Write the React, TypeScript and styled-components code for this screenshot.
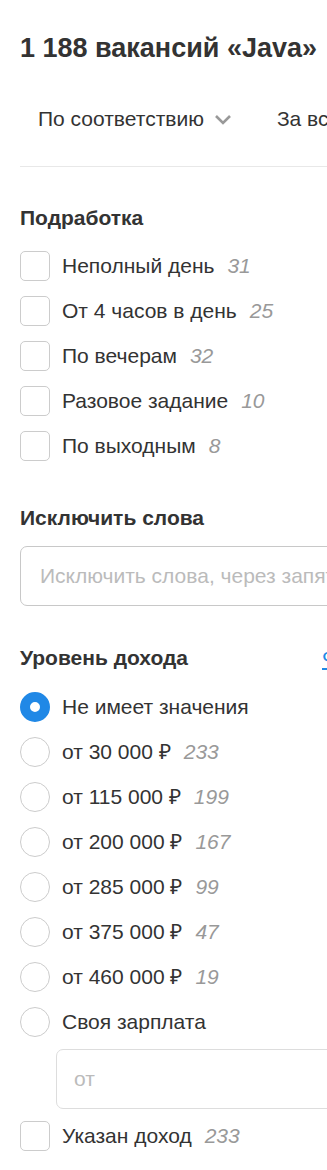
import React from 'react'
import styled, { createGlobalStyle } from 'styled-components'

const TEXT = '#333333'
const MUTED = '#999999'
const BLUE = '#2088e6'

const GlobalStyle = createGlobalStyle`
  html, body {
    margin: 0;
    padding: 0;
    background: #ffffff;
    overflow: hidden;
  }
  body {
    font-family: 'Liberation Sans', Arial, sans-serif;
    color: ${TEXT};
  }
`

const Page = styled.div`
  width: 420px;
  padding-left: 20px;
  padding-bottom: 20px;
`

const Title = styled.h1`
  margin: 31px 0 0;
  font-size: 27px;
  line-height: 35px;
  font-weight: bold;
  white-space: nowrap;
`

const SortBar = styled.div`
  display: flex;
  align-items: center;
  gap: 45px;
  margin-top: 38px;
  padding-left: 18px;
  white-space: nowrap;
`

const SortButton = styled.div`
  display: flex;
  align-items: center;
  gap: 10px;
  font-size: 21px;
  line-height: 30px;
`

const Divider = styled.hr`
  margin: 32px 0 0;
  border: 0;
  height: 1px;
  background: #e8e8e8;
`

const Section = styled.section<{ $top: number }>`
  margin-top: ${(p) => p.$top}px;
`

const Heading = styled.h2`
  margin: 0;
  font-size: 21px;
  line-height: 30px;
  font-weight: bold;
  white-space: nowrap;
`

const HeadingRow = styled.div`
  display: grid;
  grid-template-columns: 302px auto;
  align-items: center;
`

const Link = styled.span`
  color: ${BLUE};
  font-size: 21px;
  line-height: 22px;
  border-bottom: 2px solid ${BLUE};
  white-space: nowrap;
`

const List = styled.div<{ $top: number }>`
  display: flex;
  flex-direction: column;
  gap: 15px;
  margin-top: ${(p) => p.$top}px;
`

const Row = styled.label<{ $top?: number }>`
  display: flex;
  align-items: center;
  height: 30px;
  gap: 12px;
  margin-top: ${(p) => p.$top ?? 0}px;
  font-size: 21px;
  line-height: 30px;
  white-space: nowrap;
`

const Box = styled.span`
  flex: none;
  box-sizing: border-box;
  width: 30px;
  height: 30px;
  border: 1px solid #cccccc;
  border-radius: 5px;
  background: #ffffff;
`

const Radio = styled.span<{ $checked?: boolean }>`
  flex: none;
  box-sizing: border-box;
  width: 30px;
  height: 30px;
  border-radius: 50%;
  border: ${(p) => (p.$checked ? `10px solid ${BLUE}` : '1px solid #cccccc')};
  background: #ffffff;
`

const Count = styled.span`
  margin-left: 1px;
  color: ${MUTED};
  font-style: italic;
`

const TextInput = styled.input<{ $top: number; $left?: number; $border: string }>`
  display: block;
  box-sizing: border-box;
  width: ${(p) => 380 - (p.$left ?? 0)}px;
  height: 60px;
  margin: ${(p) => p.$top}px 0 0 ${(p) => p.$left ?? 0}px;
  padding: 0 19px 0 ${(p) => (p.$left ? 17 : 19)}px;
  border: 1px solid ${(p) => p.$border};
  border-radius: 7px;
  font-family: 'Liberation Sans', Arial, sans-serif;
  font-size: 21px;
  color: ${TEXT};
  outline: none;
  &::placeholder {
    color: #bbbbbb;
  }
`

const Chevron = () => (
  <svg width='18' height='11' viewBox='0 0 18 11'>
    <polyline points='2,2 9,9 16,2' fill='none' stroke='#999999' strokeWidth='2.6' />
  </svg>
)

const partTime = [
  { label: 'Неполный день', count: 31 },
  { label: 'От 4 часов в день', count: 25 },
  { label: 'По вечерам', count: 32 },
  { label: 'Разовое задание', count: 10 },
  { label: 'По выходным', count: 8 }
]

const incomes = [
  { label: 'от 30 000 ₽', count: 233 },
  { label: 'от 115 000 ₽', count: 199 },
  { label: 'от 200 000 ₽', count: 167 },
  { label: 'от 285 000 ₽', count: 99 },
  { label: 'от 375 000 ₽', count: 47 },
  { label: 'от 460 000 ₽', count: 19 }
]

const App: React.FC = () => {
  return (
    <Page>
      <GlobalStyle />
      <Title>1 188 вакансий «Java»</Title>
      <SortBar>
        <SortButton>
          По соответствию
          <Chevron />
        </SortButton>
        <SortButton>За всё время</SortButton>
      </SortBar>
      <Divider />

      <Section $top={36}>
        <Heading>Подработка</Heading>
        <List $top={18}>
          {partTime.map((item) => (
            <Row key={item.label}>
              <Box />
              {item.label}
              <Count>{item.count}</Count>
            </Row>
          ))}
        </List>
      </Section>

      <Section $top={42}>
        <Heading>Исключить слова</Heading>
        <TextInput
          $top={13}
          $border='#c8c8c8'
          placeholder='Исключить слова, через запятую'
        />
      </Section>

      <Section $top={37}>
        <HeadingRow>
          <Heading>Уровень дохода</Heading>
          <Link>Ф</Link>
        </HeadingRow>
        <List $top={19}>
          <Row>
            <Radio $checked />
            Не имеет значения
          </Row>
          {incomes.map((item) => (
            <Row key={item.label}>
              <Radio />
              {item.label}
              <Count>{item.count}</Count>
            </Row>
          ))}
          <Row>
            <Radio />
            Своя зарплата
          </Row>
        </List>
        <TextInput $top={12} $left={36} $border='#dddddd' placeholder='от' />
        <Row $top={12}>
          <Box />
          Указан доход
          <Count>233</Count>
        </Row>
      </Section>
    </Page>
  )
}

export default App
